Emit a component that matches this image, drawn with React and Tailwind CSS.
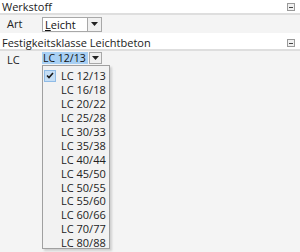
import React from 'react';

const items = ['LC 12/13', 'LC 16/18', 'LC 20/22', 'LC 25/28', 'LC 30/33', 'LC 35/38', 'LC 40/44', 'LC 45/50', 'LC 50/55', 'LC 55/60', 'LC 60/66', 'LC 70/77', 'LC 80/88'];

const Collapse = () => (
  <span className="w-[8px] h-[8px] border border-[#9a9a9a] bg-[#f0f0f0] flex items-center justify-center">
    <span className="w-[4px] h-px bg-[#444]" />
  </span>
);

const Arrow = () => (
  <svg width="7" height="4" viewBox="0 0 7 4"><path d="M0 0h7L3.5 4z" fill="#222" /></svg>
);

// section header: white strip with collapse box, grey rule under it
const Header = ({ title, h }) => (
  <div className={`${h} bg-white flex items-end justify-between pl-[2px] pr-[5px] border-b-2 border-[#dedede]`}>
    <span className="text-[11px] leading-[13px] text-[#222] whitespace-nowrap">{title}</span>
    <span className="pb-[2px]"><Collapse /></span>
  </div>
);

export default function App() {
  return (
    <div className="w-[300px] h-[252px] bg-[#f4f4f4] overflow-hidden relative" style={{ fontFamily: '"Open Sans", "Noto Sans", sans-serif' }}>
      <Header title="Werkstoff" h="h-[15px]" />
      <div className="h-[18px] flex items-center">
        <span className="w-[42px] pl-[7px] text-[11px] text-[#222]">Art</span>
        <div className="flex h-[15px]">
          <div className="w-[46px] bg-white border border-[#a8a8a8] text-[11px] leading-[13px] pl-[2px] text-[#111] whitespace-nowrap"><span className="underline">L</span>eicht</div>
          <div className="w-[14px] bg-[#f0f0f0] border border-[#a8a8a8] border-l-0 flex items-center justify-center"><Arrow /></div>
        </div>
      </div>
      <Header title="Festigkeitsklasse Leichtbeton" h="h-[18px]" />
      <div className="h-[16px] flex items-start pt-[1px]">
        <span className="w-[42px] pl-[7px] text-[11px] leading-[13px] text-[#222] pt-[1px]">LC</span>
        <div className="flex h-[12px]">
          <div className="w-[46px] bg-[#a8d0f4] text-[10.5px] leading-[12px] pl-[1px] text-[#111] whitespace-nowrap">LC 12/13</div>
          <div className="w-[13px] ml-[1px] bg-[#f0f0f0] border border-[#a8a8a8] flex items-center justify-center"><Arrow /></div>
        </div>
      </div>
      <div className="absolute left-[42px] top-[65px] w-[68px] h-[184px] bg-[#f2f2f2] border border-[#a0a0a0] pt-[3px] shadow-[2px_2px_2px_rgba(0,0,0,0.15)]">
        {items.map((it, i) => (
          <div key={it} className="h-[13.9px] flex items-center">
            <span className={`w-[12px] h-[12px] ml-[1px] flex items-center justify-center ${i === 0 ? 'bg-[#c5def5] border border-[#8fbbe6]' : ''}`}>
              {i === 0 && (
                <svg width="8" height="7" viewBox="0 0 8 7"><path d="M1 3.5l2 2L7 1" stroke="#1a1a1a" strokeWidth="1.6" fill="none" /></svg>
              )}
            </span>
            <span className="ml-[5px] text-[11px] leading-[13px] text-[#222] whitespace-nowrap">{it}</span>
          </div>
        ))}
      </div>
    </div>
  );
}
